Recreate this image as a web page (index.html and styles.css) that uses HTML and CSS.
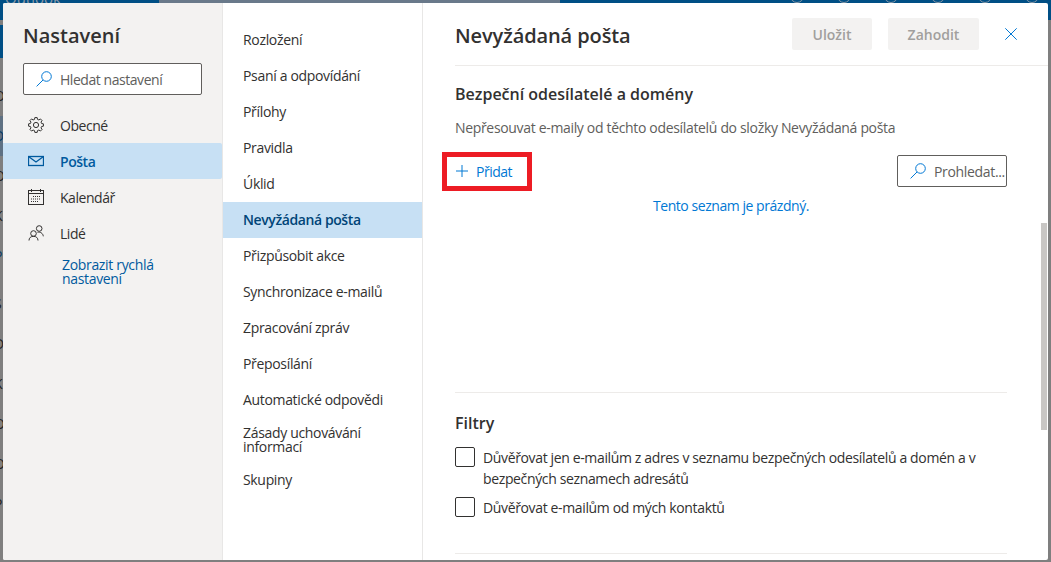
FILE: index.html
```html
<!DOCTYPE html>
<html lang="cs">
<head>
  <meta charset="UTF-8" />
  <title>Nastavení</title>
  <link rel="stylesheet" href="styles.css">
</head>
<body>

<!-- ztlumena stranka pod dialogem -->
<div id="backdrop">
  <div class="bg-top">
    <span class="bg-brand">Outlook</span>
    <div class="bg-search"></div>
    <div class="bg-icons">
      <span></span><span></span><span></span><span></span><span></span><span></span>
    </div>
  </div>
  <div class="bg-new"></div>
  <ul class="bg-list">
    <li>O</li>
    <li class="bg-active">D</li>
    <li>O</li>
    <li>K</li>
    <li class="bg-blue">P</li>
    <li class="bg-gap">S</li>
    <li>D</li>
    <li>K</li>
    <li>O</li>
    <li>O</li>
    <li>P</li>
  </ul>
</div>

<div id="dialog">
  <aside class="side">
    <h1>Nastavení</h1>
    <div class="side-search">
      <svg class="ico-search" viewBox="0 0 16 16"><circle cx="10.5" cy="5.5" r="4.8"/><path d="M7 9 0.6 15.4"/></svg>
      <span>Hledat nastavení</span>
    </div>
    <ul class="side-nav">
      <li>
        <svg class="ico" viewBox="-8 -8 16 16"><polygon points="5.6,-1.5 7.41,-1.17 7.41,1.17 5.6,1.5 5.02,2.9 6.07,4.41 4.41,6.07 2.9,5.02 1.5,5.6 1.17,7.41 -1.17,7.41 -1.5,5.6 -2.9,5.02 -4.41,6.07 -6.07,4.41 -5.02,2.9 -5.6,1.5 -7.41,1.17 -7.41,-1.17 -5.6,-1.5 -5.02,-2.9 -6.07,-4.41 -4.41,-6.07 -2.9,-5.02 -1.5,-5.6 -1.17,-7.41 1.17,-7.41 1.5,-5.6 2.9,-5.02 4.41,-6.07 6.07,-4.41 5.02,-2.9"/><circle r="2.6"/></svg>
        Obecné
      </li>
      <li class="selected">
        <svg class="ico" viewBox="0 0 16 16"><rect x="0.5" y="3.5" width="15" height="9"/><path d="M0.5 3.5 8 9l7.5-5.5"/></svg>
        Pošta
      </li>
      <li>
        <svg class="ico" viewBox="0 0 16 16"><rect x="0.5" y="1.5" width="15" height="14"/><path d="M0.5 4.5h15M3.5 0v3M12.5 0v3"/><path class="dots" d="M5 7.5h7M3 10h10M3 12.5h7"/></svg>
        Kalendář
      </li>
      <li>
        <svg class="ico" viewBox="0 0 16 16"><circle cx="5.5" cy="8.5" r="2.8"/><circle cx="11.2" cy="3.5" r="2.8"/><path d="M1 15.5c0-2.6 1.8-4.2 4.5-4.2S10 12.900 10 15.500M9.500 7.300c2.800-.7 5.500 1 5.800 4"/></svg>
        Lidé
      </li>
    </ul>
    <a class="quick-link">Zobrazit rychlá nastavení</a>
  </aside>

  <nav class="sub">
    <div class="sub-item">Rozložení</div>
    <div class="sub-item">Psaní a odpovídání</div>
    <div class="sub-item">Přílohy</div>
    <div class="sub-item">Pravidla</div>
    <div class="sub-item">Úklid</div>
    <div class="sub-item selected">Nevyžádaná pošta</div>
    <div class="sub-item">Přizpůsobit akce</div>
    <div class="sub-item">Synchronizace e-mailů</div>
    <div class="sub-item">Zpracování zpráv</div>
    <div class="sub-item">Přeposílání</div>
    <div class="sub-item">Automatické odpovědi</div>
    <div class="sub-item tall">Zásady uchovávání informací</div>
    <div class="sub-item">Skupiny</div>
  </nav>

  <main class="content">
    <header class="content-head">
      <h2>Nevyžádaná pošta</h2>
      <button class="btn btn-save">Uložit</button>
      <button class="btn btn-discard">Zahodit</button>
      <svg class="ico-close" viewBox="0 0 12 12"><path d="M0.300 0.300 11.700 11.700M11.700 0.300 0.300 11.700"/></svg>
    </header>

    <div class="content-body">
      <section class="safe">
        <h3>Bezpeční odesílatelé a domény</h3>
        <p class="desc">Nepřesouvat e-maily od těchto odesílatelů do složky Nevyžádaná pošta</p>
        <div class="toolbar">
          <div class="add">
            <svg class="ico-plus" viewBox="0 0 12 12"><path d="M6 0v12M0 6h12"/></svg>
            Přidat
          </div>
          <div class="find">
            <svg class="ico-search" viewBox="0 0 16 16"><circle cx="10.500" cy="5.500" r="4.800"/><path d="M7 9 0.600 15.400"/></svg>
            <span>Prohledat...</span>
          </div>
        </div>
        <p class="empty">Tento seznam je prázdný.</p>
      </section>

      <section class="filters">
        <h3>Filtry</h3>
        <label class="check"><span class="box"></span><span>Důvěřovat jen e-mailům z adres v seznamu bezpečných odesílatelů a domén a v bezpečných seznamech adresátů</span></label>
        <label class="check"><span class="box"></span><span>Důvěřovat e-mailům od mých kontaktů</span></label>
      </section>
    </div>
    <div class="scrollbar"></div>
  </main>
</div>

</body>
</html>
```

FILE: styles.css
```css
* {
  box-sizing: border-box;
}

html, body {
  height: 100%;
  margin: 0;
  overflow: hidden;
  font-family: "Open Sans", "Liberation Sans", sans-serif;
  letter-spacing: -0.33px;
  background: #7f7f7f;
  color: #323130;
}

h1, h2, h3, p, ul {
  margin: 0;
  padding: 0;
}

ul {
  list-style: none;
}

/* podklad */
#backdrop {
  height: 100%;
  overflow: hidden;
}

.bg-top {
  display: flex;
  height: 20px;
  background: #004f85;
}

.bg-brand {
  width: 159px;
  margin-top: -2px;
  padding-left: 5px;
  font-size: 15px;
  line-height: 0;
  letter-spacing: 0;
  color: #8c9aa8;
}

.bg-search {
  width: 401px;
  height: 3px;
  background: #69798a;
}

.bg-icons {
  display: flex;
  gap: 33px;
  margin-left: 230px;
}

.bg-icons span {
  width: 14px;
  height: 14px;
  margin-top: -11px;
  border: 1px solid #8c9aa8;
  border-radius: 50%;
}

.bg-new {
  width: 3px;
  height: 33px;
  margin-top: 5px;
  background: #004f85;
}

.bg-list {
  padding-top: 18px;
  font-size: 14px;
  line-height: 40px;
  color: #222;
}

.bg-list li {
  width: 3px;
  height: 40px;
  text-indent: -6px;
  overflow: hidden;
}

.bg-list .bg-active {
  background: #5f7183;
  color: #073a63;
}

.bg-list .bg-blue {
  color: #073a63;
}

.bg-list .bg-gap {
  margin-top: 8px;
}

/* dialog */
#dialog {
  position: absolute;
  left: 3px;
  top: 3px;
  width: 1045px;
  height: 557px;
  display: flex;
  background: #fff;
  border-radius: 2px;
  overflow: hidden;
}

.side {
  width: 220px;
  flex: none;
  padding-top: 21px;
  background: #f3f2f1;
  border-right: 1px solid #e8e7e6;
}

.side h1 {
  margin-left: 20px;
  font-size: 20px;
  line-height: 24px;
  font-weight: 600;
  letter-spacing: 0;
}

.side-search {
  display: flex;
  align-items: center;
  gap: 8px;
  width: 179px;
  height: 32px;
  margin: 15px 0 12px 20px;
  padding-left: 12px;
  background: #fff;
  border: 1px solid #605e5c;
  border-radius: 2px;
  font-size: 14px;
  letter-spacing: -0.45px;
  color: #605e5c;
}

.ico-search {
  width: 16px;
  height: 16px;
  flex: none;
  fill: none;
  stroke: #0078d4;
  stroke-width: 1;
}

.side-nav li {
  display: flex;
  align-items: center;
  gap: 16px;
  height: 36px;
  padding-left: 25px;
  font-size: 14px;
  letter-spacing: -0.45px;
}

.side-nav .selected {
  background: #c7e0f4;
  border-radius: 0 2px 2px 0;
  color: #005a9e;
  font-weight: 600;
}

.ico {
  width: 16px;
  height: 16px;
  flex: none;
  fill: none;
  stroke: #323130;
  stroke-width: 1;
}

.selected .ico {
  stroke: #005a9e;
  stroke-width: 1.300;
}

.ico .dots {
  stroke-dasharray: 1 1;
}

.quick-link {
  display: block;
  width: 130px;
  margin: 7px 0 0 59px;
  font-size: 14px;
  line-height: 14px;
  color: #005a9e;
}

.sub {
  width: 200px;
  flex: none;
  padding-top: 19px;
  border-right: 1px solid #e8e7e6;
}

.sub-item {
  display: flex;
  align-items: center;
  height: 36px;
  padding: 0 20px;
  font-size: 14px;
  line-height: 14px;
}

.sub-item.tall {
  height: 44px;
}

.sub-item.selected {
  background: #c7e0f4;
  color: #004578;
  font-weight: 600;
  letter-spacing: -0.4px;
}

.content {
  position: relative;
  flex: 1;
  min-width: 0;
}

.content-head {
  display: flex;
  align-items: center;
  height: 63px;
  margin-left: 32px;
  border-bottom: 1px solid #edebe9;
}

.content-head h2 {
  flex: 1;
  margin-top: 2px;
  font-size: 20px;
  font-weight: 600;
  letter-spacing: -0.1px;
}

.btn {
  height: 32px;
  padding: 0;
  border: none;
  border-radius: 2px;
  background: #f3f2f1;
  color: #a19f9d;
  font-family: inherit;
  font-size: 14px;
  font-weight: 600;
}

.btn-save {
  width: 80px;
  margin-right: 16px;
}

.btn-discard {
  width: 91px;
}

.ico-close {
  width: 12px;
  height: 12px;
  margin: 0 31px 0 26px;
  fill: none;
  stroke: #0078d4;
  stroke-width: 1;
}

.content-body {
  padding: 0 41px 0 32px;
}

.safe {
  height: 327px;
  padding-top: 16px;
  border-bottom: 1px solid #edebe9;
}

h3 {
  font-size: 16px;
  line-height: 24px;
  font-weight: 600;
  letter-spacing: 0;
}

.desc {
  margin-top: 12px;
  font-size: 14px;
  line-height: 20px;
  color: #605e5c;
}

.toolbar {
  display: flex;
  justify-content: space-between;
  align-items: center;
  height: 32px;
  margin-top: 17px;
}

/* cervene oramovani je soucast puvodniho obrazku */
.add {
  display: flex;
  align-items: center;
  gap: 8px;
  width: 80px;
  height: 29px;
  margin-left: -8px;
  padding-left: 9px;
  font-size: 14px;
  letter-spacing: -0.5px;
  color: #0078d4;
  outline: 5px solid #ed1c24;
}

.ico-plus {
  width: 12px;
  height: 12px;
  fill: none;
  stroke: #0078d4;
  stroke-width: 1;
}

.find {
  display: flex;
  align-items: center;
  gap: 8px;
  width: 110px;
  height: 32px;
  padding-left: 12px;
  border: 1px solid #605e5c;
  border-radius: 2px;
  font-size: 14px;
  color: #605e5c;
  white-space: nowrap;
}

.empty {
  margin-top: 9px;
  text-align: center;
  font-size: 14px;
  line-height: 20px;
  letter-spacing: -0.45px;
  color: #0078d4;
}

.filters {
  height: 161px;
  padding-top: 18px;
  border-bottom: 1px solid #edebe9;
}

.filters h3 {
  margin-bottom: 12px;
}

.check {
  display: flex;
  gap: 8px;
  margin-bottom: 8px;
  font-size: 14px;
  line-height: 21px;
  letter-spacing: -0.36px;
}

.box {
  width: 20px;
  height: 20px;
  flex: none;
  border: 1px solid #323130;
  border-radius: 2px;
}

.scrollbar {
  position: absolute;
  right: 1px;
  top: 220px;
  width: 6px;
  height: 207px;
  background: #c8c6c4;
}
```
